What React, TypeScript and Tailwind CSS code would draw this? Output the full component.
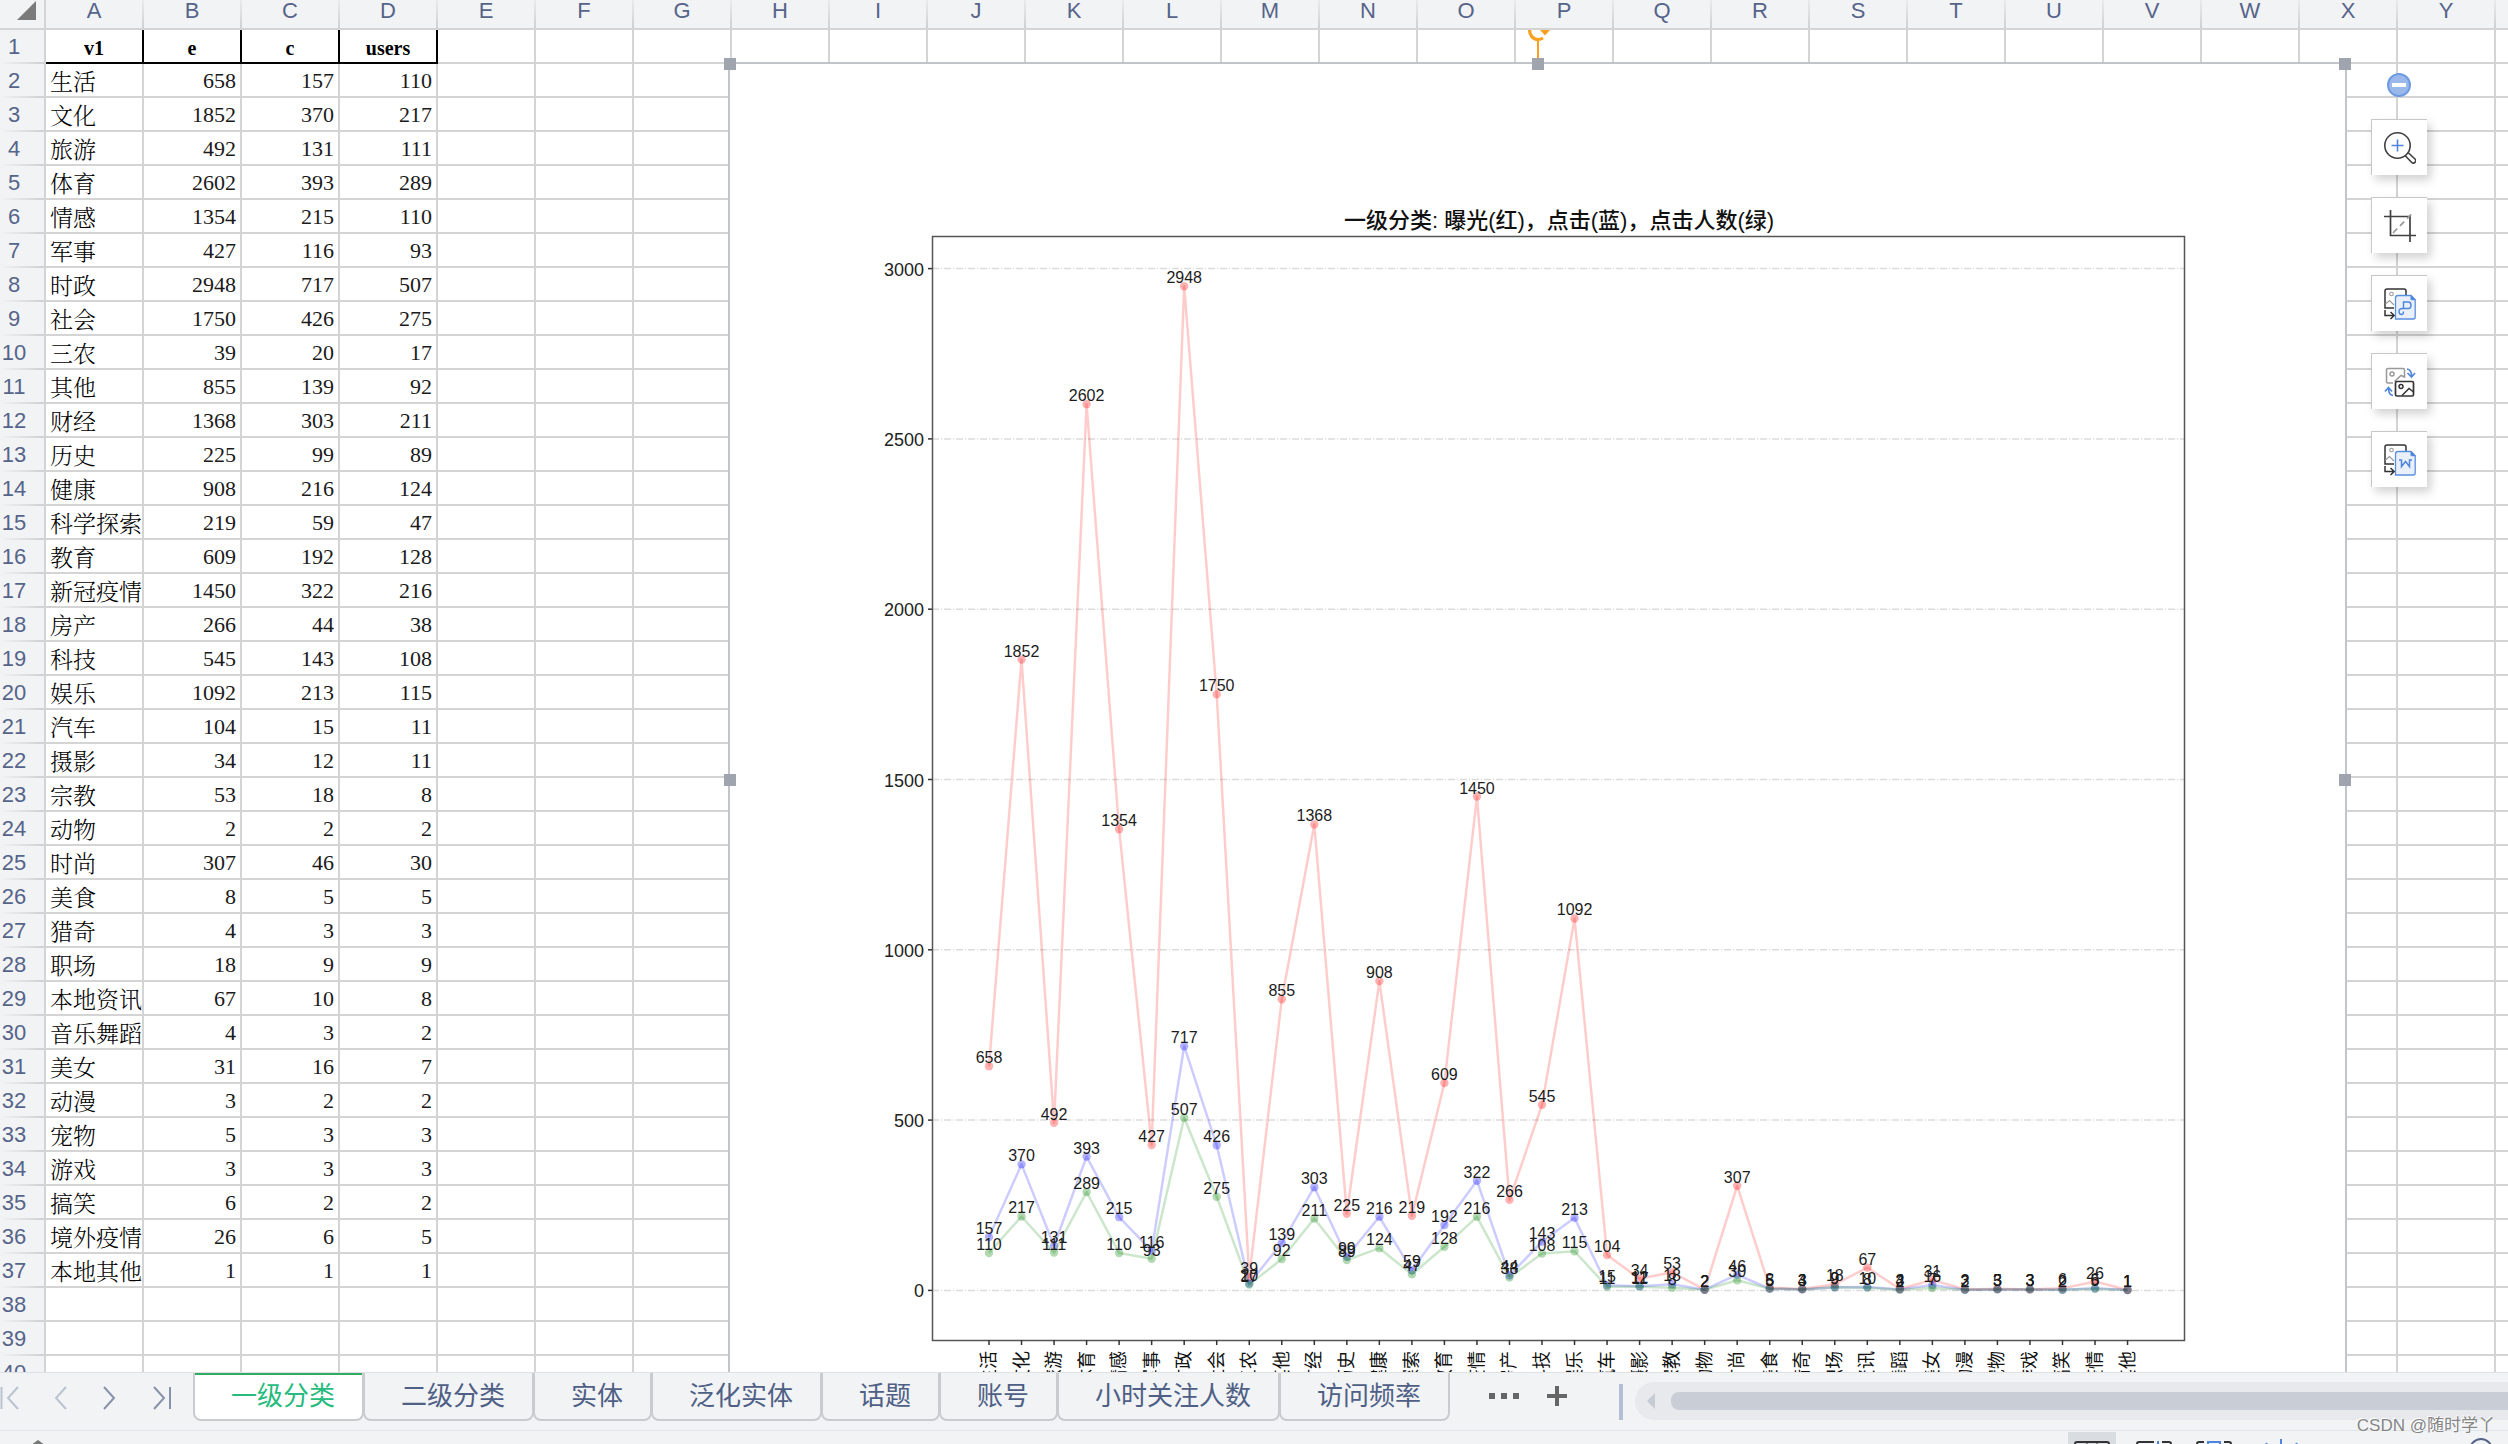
import React from "react";

type Row = [string, number, number, number];

const ROWS: Row[] = [
  ["生活", 658, 157, 110],
  ["文化", 1852, 370, 217],
  ["旅游", 492, 131, 111],
  ["体育", 2602, 393, 289],
  ["情感", 1354, 215, 110],
  ["军事", 427, 116, 93],
  ["时政", 2948, 717, 507],
  ["社会", 1750, 426, 275],
  ["三农", 39, 20, 17],
  ["其他", 855, 139, 92],
  ["财经", 1368, 303, 211],
  ["历史", 225, 99, 89],
  ["健康", 908, 216, 124],
  ["科学探索", 219, 59, 47],
  ["教育", 609, 192, 128],
  ["新冠疫情", 1450, 322, 216],
  ["房产", 266, 44, 38],
  ["科技", 545, 143, 108],
  ["娱乐", 1092, 213, 115],
  ["汽车", 104, 15, 11],
  ["摄影", 34, 12, 11],
  ["宗教", 53, 18, 8],
  ["动物", 2, 2, 2],
  ["时尚", 307, 46, 30],
  ["美食", 8, 5, 5],
  ["猎奇", 4, 3, 3],
  ["职场", 18, 9, 9],
  ["本地资讯", 67, 10, 8],
  ["音乐舞蹈", 4, 3, 2],
  ["美女", 31, 16, 7],
  ["动漫", 3, 2, 2],
  ["宠物", 5, 3, 3],
  ["游戏", 3, 3, 3],
  ["搞笑", 6, 2, 2],
  ["境外疫情", 26, 6, 5],
  ["本地其他", 1, 1, 1],
];

const COLUMNS = "ABCDEFGHIJKLMNOPQRSTUVWXYZ".split("");
const HEADINGS = ["v1", "e", "c", "users"];
const ROW_NUMBERS = Array.from({ length: 40 }, (_, i) => i + 1);

const TABS = ["一级分类", "二级分类", "实体", "泛化实体", "话题", "账号", "小时关注人数", "访问频率"];

const CELL = "h-[34px] border-r-2 border-b-2 border-[#d4d4d4] p-0 whitespace-nowrap";

function BodyCell({ row, col }: { row: number; col: number }) {
  if (row === 1 && col < 4) {
    return (
      <th
        scope="col"
        className="h-[34px] border-r-2 border-b-2 border-black p-0 pt-1 text-center font-['Liberation_Serif',serif] text-[20px] leading-7 font-bold text-black"
      >
        {HEADINGS[col]}
      </th>
    );
  }
  const record = row > 1 ? ROWS[row - 2] : undefined;
  if (!record || col > 3) return <td className={CELL} />;
  if (col === 0) {
    return (
      <td className={CELL}>
        <div className="h-8 pl-1 font-['Noto_Serif_CJK_SC','Noto_Sans_CJK_SC',serif] text-[23px] leading-[34px] font-light text-black">
          {record[0]}
        </div>
      </td>
    );
  }
  return (
    <td className={CELL}>
      <div className="h-8 pr-1 text-right font-['Liberation_Serif',serif] text-[22px] leading-[34px] text-[#1a1a1a]">
        {record[col]}
      </div>
    </td>
  );
}

function Sheet() {
  return (
    <table className="w-[2594px] table-fixed border-separate border-spacing-0 bg-white">
      <colgroup>
        <col className="w-[46px]" />
        {COLUMNS.map((c) => (
          <col key={c} className="w-[98px]" />
        ))}
      </colgroup>
      <thead>
        <tr>
          <td className="h-[30px] border-r-2 border-b-2 border-[#d4d4d4] bg-[#f1f3f5] p-0 align-top">
            <svg className="block h-5 w-9" viewBox="0 0 36 20" aria-hidden="true">
              <path d="M36 1V20H17Z" fill="#7b7b7b" />
            </svg>
          </td>
          {COLUMNS.map((c) => (
            <th
              key={c}
              scope="col"
              className="h-[30px] border-b-2 border-[#d4d4d4] bg-[#f1f3f5] bg-[linear-gradient(to_bottom,#e9ebed,#cfd0d2)] bg-[length:2px_100%] bg-right bg-no-repeat p-0 pr-0.5 align-top text-[22px] leading-[22px] font-normal text-[#56648a]"
            >
              {c}
            </th>
          ))}
        </tr>
      </thead>
      <tbody>
        {ROW_NUMBERS.map((n) => (
          <tr key={n}>
            <th
              scope="row"
              className="h-[34px] border-r-2 border-[#d4d4d4] bg-[#f1f3f5] bg-[linear-gradient(to_right,#f1f3f5,#cfd0d2)] bg-[length:100%_2px] bg-bottom bg-no-repeat p-0 pr-4 text-center text-[22px] leading-[34px] font-normal text-[#56648a]"
            >
              {n}
            </th>
            {COLUMNS.map((c, i) => (
              <BodyCell key={c} row={n} col={i} />
            ))}
          </tr>
        ))}
      </tbody>
    </table>
  );
}

/* Chart coordinates share the origin of the sheet. */
const px = (i: number) => 989 + i * 32.53;
const py = (v: number) => 1290.4 - v * 0.3406;

const SERIES = [
  { key: 1, color: "#ff0000" },
  { key: 2, color: "#0000ff" },
  { key: 3, color: "#008000" },
] as const;

function Chart() {
  return (
    <svg
      className="block h-[1432px] w-[1615px] font-['Liberation_Sans','Noto_Sans_CJK_SC',sans-serif]"
      viewBox="730 64 1615 1432"
      role="img"
      aria-label="一级分类"
    >
      {[0, 500, 1000, 1500, 2000, 2500, 3000].map((v) => (
        <g key={v}>
          <path d={`M932 ${py(v)}H2184`} stroke="#dcdcdc" strokeWidth="1.5" strokeDasharray="7 1.9 1.2 1.9" />
          <path d={`M928 ${py(v)}H932`} stroke="#333" strokeWidth="1.5" />
          <text x="924" y={py(v) + 7} textAnchor="end" fontSize="18" fill="#222">
            {v}
          </text>
        </g>
      ))}
      {SERIES.map(({ key, color }) => (
        <g key={key}>
          <polyline
            points={ROWS.map((r, i) => `${px(i)},${py(r[key])}`).join(" ")}
            fill="none"
            stroke={color}
            strokeOpacity="0.2"
            strokeWidth="2.5"
            strokeLinejoin="round"
          />
          {ROWS.map((r, i) => (
            <circle key={i} cx={px(i)} cy={py(r[key])} r="4.2" fill={color} fillOpacity="0.3" />
          ))}
        </g>
      ))}
      {SERIES.map(({ key }) =>
        ROWS.map((r, i) => (
          <text key={`${key}-${i}`} x={px(i)} y={py(r[key]) - 3} textAnchor="middle" fontSize="16" fill="#1c1c1c">
            {r[key]}
          </text>
        ))
      )}
      <rect x="932.5" y="236.5" width="1252" height="1104" fill="none" stroke="#555" strokeWidth="1.5" />
      {ROWS.map((r, i) => (
        <g key={i}>
          <path d={`M${px(i)} 1340V1345`} stroke="#333" strokeWidth="1.5" />
          <text
            transform={`translate(${px(i) + 6} 1351) rotate(-90)`}
            textAnchor="end"
            fontSize="18"
            fill="#111"
          >
            {r[0]}
          </text>
        </g>
      ))}
      <text x="1559" y="228" textAnchor="middle" fontSize="22" fontWeight="500" fill="#111">
        {"一级分类: 曝光(红)\uFF0C点击(蓝)\uFF0C点击人数(绿)"}
      </text>
    </svg>
  );
}

const HANDLE = "absolute size-3 bg-[#a0a4ae]";

function Picture() {
  return (
    <div className="absolute top-16 left-[730px]">
      <div className="relative bg-white outline-2 outline-[#c2c4cb]">
        <Chart />
        <span className={`${HANDLE} -top-1.5 -left-1.5`} />
        <span className={`${HANDLE} -top-1.5 left-1/2 -ml-1.5`} />
        <span className={`${HANDLE} -top-1.5 -right-1.5`} />
        <span className={`${HANDLE} top-1/2 -left-1.5 -mt-1.5`} />
        <span className={`${HANDLE} top-1/2 -right-1.5 -mt-1.5`} />
        <svg className="absolute -top-[34px] left-1/2 -ml-3 h-7 w-6" viewBox="0 0 24 28" fill="none" aria-hidden="true">
          <path d="M12 11V28" stroke="#f9a01f" strokeWidth="2" />
          <path d="M3.5 0C3.5 5 7 9.5 12 9.5C14 9.5 15.500 9 17 8" stroke="#f9a01f" strokeWidth="3.200" />
          <path d="M14 0H24L19 5.500Z" fill="#f9a01f" />
        </svg>
      </div>
    </div>
  );
}

function ZoomIcon() {
  return (
    <svg className="size-8" viewBox="0 0 32 32" fill="none" aria-hidden="true">
      <circle cx="13.500" cy="13.500" r="12.700" stroke="#404040" strokeWidth="1.600" />
      <path d="M7.500 13.500H19.500M13.500 7.500V19.500" stroke="#4f86dc" strokeWidth="1.600" />
      <path
        d="M21 23.500L27.500 30.300A2.200 2.200 0 0 0 31 27L24 20.500"
        stroke="#404040"
        strokeWidth="1.600"
        strokeLinejoin="round"
      />
    </svg>
  );
}

function CropIcon() {
  return (
    <svg className="size-8" viewBox="0 0 32 32" fill="none" aria-hidden="true">
      <path d="M0 6.500H26V32M6.500 0V25.500H32" stroke="#404040" strokeWidth="1.700" />
      <path d="M9 23L29.500 2" stroke="#999" strokeWidth="1.700" strokeDasharray="6 4" />
    </svg>
  );
}

function ConvertIcon({ letter }: { letter: "P" | "W" }) {
  return (
    <svg className="size-8" viewBox="0 0 32 32" fill="none" aria-hidden="true">
      <path d="M10 20H1V3Q1 1 3 1H20Q22 1 22 3V7" stroke="#333" strokeWidth="1.500" />
      <circle cx="7.500" cy="6" r="1.800" stroke="#999" strokeWidth="1.100" />
      <path d="M1.500 16L5.500 12.500L10 17" stroke="#999" strokeWidth="1.100" />
      <path d="M1 22V27.500H10M6.500 24L10.200 27.500L6.500 31" stroke="#333" strokeWidth="1.500" />
      <path d="M11.500 31V10Q11.500 7.500 14 7.500H27L31.200 11.700V29Q31.200 31 29.200 31Z" fill="#e9f0fb" stroke="#5a8fe0" strokeWidth="1.300" />
      <path d="M27 7.500V11.700H31.200Z" fill="#4f86dc" stroke="#4f86dc" />
      {letter === "P" ? (
        <path
          d="M19.500 20.500V14H24.500Q27 14 27 17.200Q27 20.500 24.500 20.500H18.500Q15 20.500 15 23.500Q15 26.500 17.500 26.500Q19.500 26.500 19.500 23.500"
          stroke="#4f86dc"
          strokeWidth="1.400"
        />
      ) : (
        <path d="M15 16H17.500V22.500L21.500 17.500L25.500 22.500V16H28" stroke="#4f86dc" strokeWidth="1.500" />
      )}
    </svg>
  );
}

function SwapIcon() {
  return (
    <svg className="size-8" viewBox="0 0 32 32" fill="none" aria-hidden="true">
      <path d="M9 17H4Q2.500 17 2.500 15.500V4Q2.500 2.500 4 2.500H19Q20.500 2.500 20.500 4V11L17 9.500L10.500 15.500" stroke="#999" strokeWidth="1.500" />
      <circle cx="8" cy="8" r="2" stroke="#999" strokeWidth="1.500" />
      <rect x="11.500" y="15.500" width="18" height="14.500" rx="1.500" stroke="#333" strokeWidth="1.700" />
      <circle cx="17" cy="20.500" r="2" stroke="#333" strokeWidth="1.500" />
      <path d="M18 29.500L25 22.500L29.500 26" stroke="#333" strokeWidth="1.500" />
      <path d="M23 3Q27.500 3.500 27.500 10M23.500 7L27.500 11L31 7" stroke="#4f86dc" strokeWidth="1.700" />
      <path d="M9 29.500Q4.500 29 4.500 22M1 25.500L4.500 21.500L8 25.500" stroke="#4f86dc" strokeWidth="1.700" />
    </svg>
  );
}

const TOOLS: { label: string; icon: React.ReactNode }[] = [
  { label: "放大", icon: <ZoomIcon /> },
  { label: "裁剪", icon: <CropIcon /> },
  { label: "图片转PDF", icon: <ConvertIcon letter="P" /> },
  { label: "更换图片", icon: <SwapIcon /> },
  { label: "图片转文字", icon: <ConvertIcon letter="W" /> },
];

function PictureTools() {
  return (
    <div className="absolute top-[73px] left-[2371px] flex flex-col items-center gap-[22px]">
      <button
        type="button"
        aria-label="收起"
        className="flex size-6 items-center justify-center rounded-full border-2 border-[#6f9be3] bg-[#9ab8ea]"
      >
        <span className="h-1 w-3.5 bg-white" />
      </button>
      {TOOLS.map(({ label, icon }) => (
        <button
          key={label}
          type="button"
          aria-label={label}
          className="flex size-14 items-center justify-center border-t border-l border-[#c8c8c8] bg-white shadow-[4px_5px_9px_rgba(0,0,0,0.18)]"
        >
          {icon}
        </button>
      ))}
    </div>
  );
}

function NavButton({ label, d, dim }: { label: string; d: string; dim?: boolean }) {
  return (
    <button type="button" aria-label={label} className={dim ? "text-[#bcc3d0]" : "text-[#8893ab]"}>
      <svg className="block h-6 w-5" viewBox="0 0 20 24" fill="none" stroke="currentColor" strokeWidth="2" aria-hidden="true">
        <path d={d} />
      </svg>
    </button>
  );
}

function TabBar() {
  return (
    <div className="flex h-[58px] shrink-0 items-start overflow-hidden border-t border-[#dfe1e5] bg-[#f1f3f5]">
      <nav aria-label="工作表导航" className="flex w-[193px] shrink-0 gap-[31px] pt-[13px]">
        <NavButton label="第一个" dim d="M1.500 1V23M18 1L8 12L18 23" />
        <NavButton label="上一个" dim d="M15 1L5 12L15 23" />
        <NavButton label="下一个" d="M2 1L12 12L2 23" />
        <NavButton label="最后一个" d="M1 1L11 12L1 23M17 1V23" />
      </nav>
      <div role="tablist" className="-mt-px flex shrink-0">
        {TABS.map((t, i) => (
          <button
            key={t}
            type="button"
            role="tab"
            aria-selected={i === 0}
            className={
              i === 0
                ? "h-[49px] rounded-b-lg border-x-2 border-b-2 border-[#c9cbce] bg-white pr-[27px] pl-[36px] text-[26px] leading-[46px] whitespace-nowrap text-[#27bb7d] shadow-[inset_0_3px_0_#2fab62]"
                : "-ml-px h-[49px] rounded-b-lg border-x-2 border-t border-b-2 border-[#c9cbce] pr-[27px] pl-[36px] text-[26px] leading-[46px] whitespace-nowrap text-[#4f5f85]"
            }
          >
            {t}
          </button>
        ))}
      </div>
      <button type="button" aria-label="更多工作表" className="mt-5 ml-[39px] flex shrink-0 gap-1.5">
        <span className="size-1.5 bg-[#666]" />
        <span className="size-1.5 bg-[#666]" />
        <span className="size-1.5 bg-[#666]" />
      </button>
      <button type="button" aria-label="新建工作表" className="mt-[13px] ml-7 shrink-0">
        <svg className="block size-5" viewBox="0 0 20 20" aria-hidden="true">
          <path d="M10 0V20M0 10H20" stroke="#666" strokeWidth="4" />
        </svg>
      </button>
      <span className="mt-[11px] ml-[52px] h-9 w-1 shrink-0 bg-[#b5bfd3]" />
      <div className="mt-[9px] ml-3 flex h-[38px] flex-1 items-center gap-4 rounded-l-full bg-[#e8e9ec] pl-3">
        <svg className="h-4 w-2" viewBox="0 0 8 16" aria-hidden="true">
          <path d="M8 0V16L0 8Z" fill="#c6cbd4" />
        </svg>
        <span className="h-[18px] flex-1 rounded-l-lg bg-[#c9cdd6]" />
      </div>
    </div>
  );
}

function StatusBar() {
  return (
    <footer className="flex h-3.5 shrink-0 items-start justify-between overflow-hidden border-t border-[#e0e3e8] bg-[#f1f3f5]">
      <svg className="mt-[9px] ml-[31px] h-4 w-3.5" viewBox="0 0 14 16" fill="none" aria-hidden="true">
        <path d="M1 6L7 1.500L13 6" stroke="#777" strokeWidth="2.500" />
      </svg>
      <div className="flex items-start">
        <button type="button" aria-label="普通视图" className="mt-px flex h-8 w-12 justify-center bg-[#d9dce1] pt-[9px]">
          <svg className="h-6 w-9" viewBox="0 0 36 24" fill="none" stroke="#333" aria-hidden="true">
            <rect x="1" y="1" width="34" height="22" rx="2" strokeWidth="2" />
            <path d="M13 1V23M23 1V23" />
          </svg>
        </button>
        <button type="button" aria-label="分页预览" className="mt-2.5 ml-5">
          <svg className="block h-6 w-9" viewBox="0 0 36 24" fill="none" strokeWidth="2" aria-hidden="true">
            <path d="M18 1H3Q1 1 1 3V23M26 1H33Q35 1 35 3V23" stroke="#333" />
            <path d="M22 0V24" stroke="#4f86dc" />
          </svg>
        </button>
        <button type="button" aria-label="页面布局" className="mt-2.5 ml-6">
          <svg className="block h-6 w-9" viewBox="0 0 36 24" fill="none" strokeWidth="2" aria-hidden="true">
            <path d="M8 1H3Q1 1 1 3V23M28 1H33Q35 1 35 3V23" stroke="#333" />
            <path d="M12 23V1H24V23" stroke="#4f86dc" />
          </svg>
        </button>
        <button type="button" aria-label="阅读模式" className="mt-2 ml-8">
          <svg className="block h-6 w-9" viewBox="0 0 36 24" stroke="#4f86dc" strokeWidth="2" aria-hidden="true">
            <path d="M2 4L4 7M17 0V24M33 4L31 7" />
          </svg>
        </button>
        <button type="button" aria-label="缩放" className="mt-[7px] mr-[15px] ml-[169px]">
          <svg className="block size-6" viewBox="0 0 24 24" fill="none" aria-hidden="true">
            <circle cx="12" cy="12" r="11" stroke="#56648a" strokeWidth="2" />
          </svg>
        </button>
      </div>
    </footer>
  );
}

export default function App() {
  return (
    <div className="relative flex h-screen flex-col overflow-hidden bg-[#f1f3f5] font-['Liberation_Sans','Noto_Sans_CJK_SC',sans-serif]">
      <main className="relative min-h-0 flex-1 overflow-hidden">
        <Sheet />
        {/* Floating objects are clipped where the column headings end. */}
        <div className="absolute inset-x-0 top-0 bottom-0 [clip-path:inset(30px_0_0_0)]">
          <Picture />
          <PictureTools />
        </div>
      </main>
      <TabBar />
      <StatusBar />
      <p className="pointer-events-none absolute right-[13px] bottom-1.5 text-[17px] leading-6 text-[#858585] [text-shadow:-1px_-1px_0_#fff]">
        CSDN @随时学丫
      </p>
    </div>
  );
}
